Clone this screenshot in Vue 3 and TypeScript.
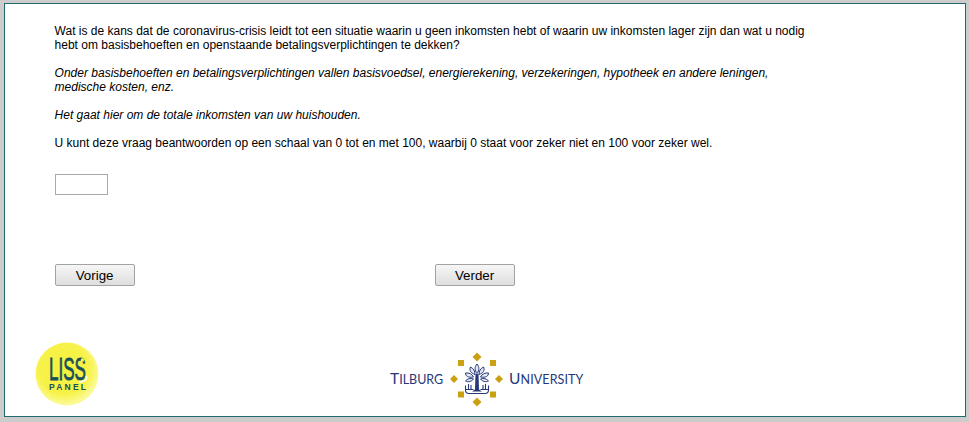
<template>
  <div class="frame">
    <div class="question">
      <p>
        Wat is de kans dat de coronavirus-crisis leidt tot een situatie waarin u geen inkomsten hebt of waarin uw inkomsten lager zijn dan wat u nodig<br />
        hebt om basisbehoeften en openstaande betalingsverplichtingen te dekken?
      </p>
      <p class="note">
        Onder basisbehoeften en betalingsverplichtingen vallen basisvoedsel, energierekening, verzekeringen, hypotheek en andere leningen,<br />
        medische kosten, enz.
      </p>
      <p class="note">Het gaat hier om de totale inkomsten van uw huishouden.</p>
      <p>U kunt deze vraag beantwoorden op een schaal van 0 tot en met 100, waarbij 0 staat voor zeker niet en 100 voor zeker wel.</p>
      <input v-model="answer" class="answer" type="text" />
    </div>

    <div class="nav">
      <button class="nav-btn" type="button">Vorige</button>
      <button class="nav-btn" type="button">Verder</button>
    </div>

    <div class="logos">
      <svg class="liss" width="64" height="64" viewBox="0 0 64 64">
        <defs>
          <radialGradient id="lissGlow" cx="45%" cy="42%" r="56%">
            <stop offset="0%" stop-color="#f6f03c" />
            <stop offset="72%" stop-color="#f7f24a" />
            <stop offset="100%" stop-color="#fbfa96" />
          </radialGradient>
        </defs>
        <circle cx="32" cy="32" r="31.500" fill="url(#lissGlow)" />
        <text x="14" y="38" class="liss-word" textLength="37" lengthAdjust="spacingAndGlyphs">LISS</text>
        <circle cx="47.500" cy="18" r="1.800" fill="#f7f24a" />
        <path d="M44 39.500c4.500 1 8-1 7.500-5.500" fill="none" stroke="#fffde0" stroke-width="1.800" />
        <text x="14" y="48" class="liss-panel" textLength="37">PANEL</text>
      </svg>

      <div class="tilburg">
        <span class="tu-word tu-left"><span class="cap">T</span>ILBURG</span>
        <svg width="56" height="56" viewBox="0 0 56 56">
          <g fill="#c9a112">
            <path d="M28 1.500l4.500 4.500-4.500 4.500-4.500-4.500z" />
            <path d="M28 46.500l4.500 4.500-4.500 4.500-4.500-4.500z" />
            <path d="M5 24l4 4-4 4-4-4z" />
            <path d="M50 24l4 4-4 4-4-4z" />
            <rect x="9" y="9" width="6" height="6" />
            <rect x="41" y="9" width="6" height="6" />
            <rect x="9" y="40.500" width="6" height="6" />
            <rect x="41" y="40.500" width="6" height="6" />
          </g>
          <g fill="#e6e9f4" stroke="#26387a" stroke-width="1">
            <path d="M28 13c-2.500 3-2.500 6 0 9.500 2.500-3.500 2.500-6.500 0-9.500z" />
            <path d="M21.500 16c-1.500 3 0 6 4.500 7.500 0-3.500-1.500-6-4.500-7.500z" />
            <path d="M34.500 16c1.500 3 0 6-4.500 7.500 0-3.500 1.500-6 4.500-7.500z" />
            <path d="M16.500 22c0 3 2.500 5 8 4-1.500-3-4.500-4.500-8-4z" />
            <path d="M39.500 22c0 3-2.500 5-8 4 1.500-3 4.500-4.500 8-4z" />
            <path d="M16.500 30c3 1.500 6 .5 8-2-3-1-6-.5-8 2z" />
            <path d="M39.500 30c-3 1.500-6 .5-8-2 3-1 6-.5 8 2z" />
          </g>
          <g fill="none" stroke="#26387a" stroke-width="1.100">
            <path d="M16.500 34.500v4.500c0 2.500 1.500 3.500 3.500 3.500h16c2 0 3.500-1 3.500-3.500v-4.500" />
            <path d="M19.500 33v5M22 34v4M34 34v4M36.500 33v5" />
            <path d="M17 38.500h7.500M31.500 38.500h7.500" />
          </g>
          <path d="M26.500 23h3l.5 15.500 3 2h-10l3-2z" fill="#26387a" />
        </svg>
        <span class="tu-word tu-right"><span class="cap">U</span>NIVERSITY</span>
      </div>
    </div>
  </div>
</template>

<script setup lang="ts">
import { ref } from 'vue';

const answer = ref('');
</script>

<style>
html,
body {
  margin: 0;
  background: #cccccc;
}
</style>

<style scoped>
.frame {
  box-sizing: border-box;
  width: 962px;
  height: 414px;
  margin: 3px 0 0 4px;
  border: 1px solid #1e6b6e;
  background: #fff;
  font-family: 'Liberation Sans', Arial, sans-serif;
  font-size: 12px;
  line-height: 14px;
  color: #000;
  display: flex;
  flex-direction: column;
}

.question {
  padding: 20px 0 0 49.600px;
}

.question p {
  margin: 0 0 14px;
}

.note {
  font-style: italic;
}

.answer {
  display: block;
  box-sizing: border-box;
  width: 53px;
  height: 21px;
  margin-top: 24px;
  padding: 1px 2px;
  border: 1px solid #a9a9a9;
  background: #fff;
}

.nav {
  display: flex;
  gap: 300px;
  padding: 69px 0 0 49.600px;
}

.nav-btn {
  box-sizing: border-box;
  width: 80px;
  height: 22px;
  padding: 0;
  border: 1px solid #a3a3a3;
  border-radius: 2px;
  background: linear-gradient(#f6f6f6, #dedede);
  font-family: 'Liberation Sans', Arial, sans-serif;
  font-size: 13.333px;
  color: #000;
}

.logos {
  display: flex;
  align-items: flex-start;
  padding: 56px 0 0 30px;
}

.liss {
  overflow: visible;
}

.liss-word {
  font-family: 'Liberation Sans', sans-serif;
  font-size: 32px;
  fill: #17505c;
  stroke: #17505c;
  stroke-width: 0.8px;
}

.liss-panel {
  font-family: 'Liberation Sans', sans-serif;
  font-size: 8.500px;
  font-weight: 700;
  fill: #17505c;
}

.tilburg {
  display: flex;
  align-items: center;
  gap: 4px;
  margin: 9px 0 0 291px;
}

.tu-word {
  font-family: Lato, 'Open Sans', sans-serif;
  font-size: 12.500px;
  line-height: 16px;
  color: #26387a;
  white-space: nowrap;
}

.tu-left {
  width: 55px;
}

.tu-right {
  width: 75px;
  letter-spacing: 0.1px;
}

.cap {
  font-size: 15.500px;
}
</style>
